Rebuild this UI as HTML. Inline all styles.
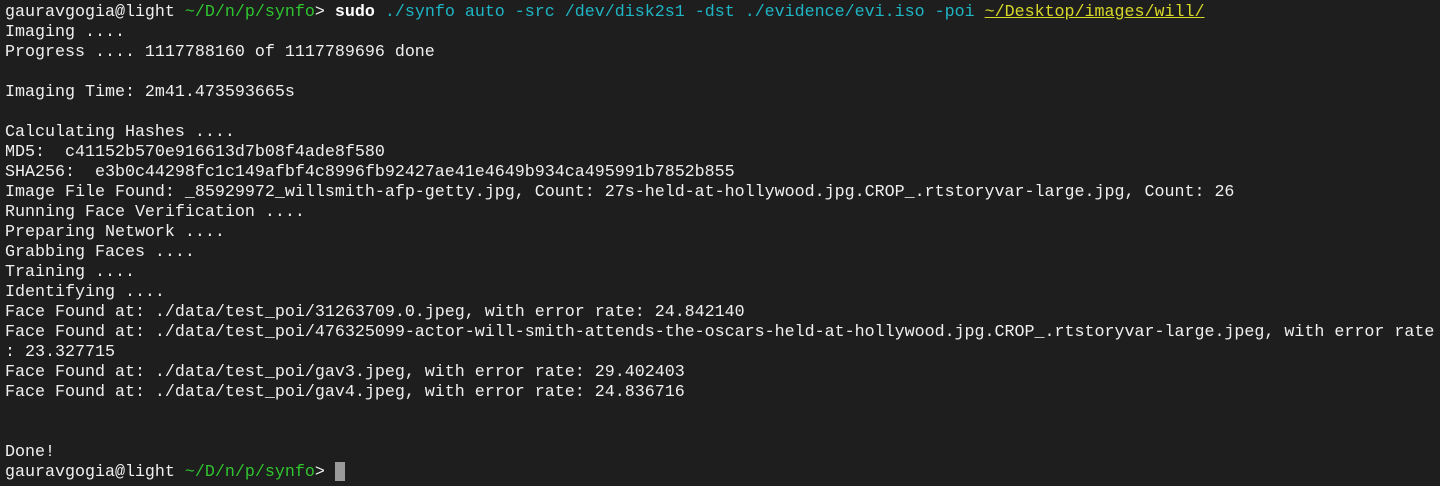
<!DOCTYPE html>
<html><head><meta charset="utf-8"><style>
html,body{margin:0;padding:0;background:#1e1e1e;width:1440px;height:486px;overflow:hidden}
pre{margin:0;position:absolute;left:5px;top:3px;font-family:"Liberation Mono",monospace;font-size:16.67px;line-height:20px;color:#f0f0f0;white-space:pre}
.g{color:#2fc52f}.c{color:#1fb5c4}.y{color:#d7d72a;text-decoration:underline}.b{font-weight:bold;color:#fff}
.cur{display:inline-block;width:10px;height:19px;background:#9a9a9a;vertical-align:top;margin-top:-1px}
</style></head><body><pre>gauravgogia@light <span class="g">~/D/n/p/synfo</span>&gt; <span class="b">sudo</span> <span class="c">./synfo auto -src /dev/disk2s1 -dst ./evidence/evi.iso -poi</span> <span class="y">~/Desktop/images/will/</span>
Imaging ....
Progress .... 1117788160 of 1117789696 done

Imaging Time: 2m41.473593665s

Calculating Hashes ....
MD5:  c41152b570e916613d7b08f4ade8f580
SHA256:  e3b0c44298fc1c149afbf4c8996fb92427ae41e4649b934ca495991b7852b855
Image File Found: _85929972_willsmith-afp-getty.jpg, Count: 27s-held-at-hollywood.jpg.CROP_.rtstoryvar-large.jpg, Count: 26
Running Face Verification ....
Preparing Network ....
Grabbing Faces ....
Training ....
Identifying ....
Face Found at: ./data/test_poi/31263709.0.jpeg, with error rate: 24.842140
Face Found at: ./data/test_poi/476325099-actor-will-smith-attends-the-oscars-held-at-hollywood.jpg.CROP_.rtstoryvar-large.jpeg, with error rate
: 23.327715
Face Found at: ./data/test_poi/gav3.jpeg, with error rate: 29.402403
Face Found at: ./data/test_poi/gav4.jpeg, with error rate: 24.836716


Done!
gauravgogia@light <span class="g">~/D/n/p/synfo</span>&gt; <span class="cur"></span></pre></body></html>
